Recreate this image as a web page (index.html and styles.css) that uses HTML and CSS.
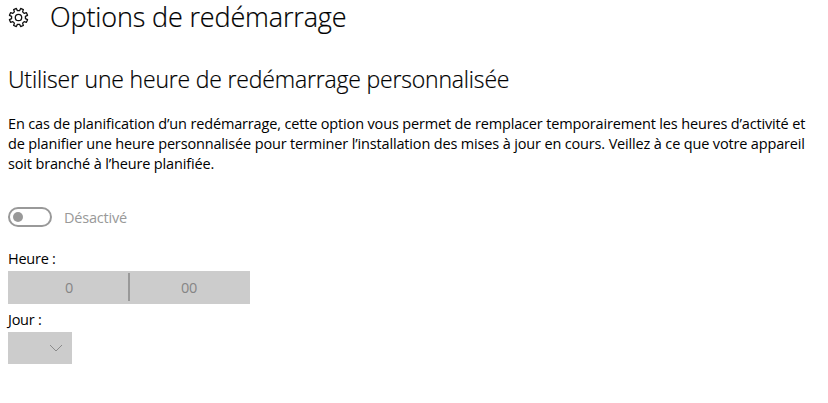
FILE: index.html
```html
<!DOCTYPE html>
<html lang="fr">
<head>
<meta charset="utf-8">
<title>Options de redémarrage</title>
<link rel="stylesheet" href="styles.css">
</head>
<body>
<header class="page-header">
  <svg class="gear" viewBox="-10.5 -10.5 21 21" aria-hidden="true">
    <path d="M6.91 1.1 9.04 2.17 7.93 4.86 5.66 4.11 4.11 5.66 4.86 7.93 2.17 9.04 1.1 6.91H-1.1L-2.17 9.04-4.86 7.93-4.11 5.66-5.66 4.11-7.93 4.86-9.04 2.17-6.91 1.1V-1.1L-9.04-2.17-7.93-4.86-5.66-4.11-4.11-5.66-4.86-7.93-2.17-9.04-1.1-6.91H1.1L2.17-9.04 4.86-7.93 4.11-5.66 5.66-4.11 7.93-4.86 9.04-2.17 6.91-1.1Z"/>
    <circle r="3.2"/>
  </svg>
  <h1>Options de redémarrage</h1>
</header>
<main>
  <h2>Utiliser une heure de redémarrage personnalisée</h2>
  <p class="description">
    <span>En cas de planification d’un redémarrage, cette option vous permet de remplacer temporairement les heures d’activité et</span>
    <span>de planifier une heure personnalisée pour terminer l’installation des mises à jour en cours. Veillez à ce que votre appareil</span>
    <span>soit branché à l’heure planifiée.</span>
  </p>
  <div class="toggle-row">
    <div class="toggle"><div class="knob"></div></div>
    <span class="state">Désactivé</span>
  </div>
  <div class="label hour">Heure :</div>
  <div class="time-picker">
    <div class="cell">0</div>
    <div class="divider"></div>
    <div class="cell">00</div>
  </div>
  <div class="label day">Jour :</div>
  <div class="select">
    <svg class="chevron" viewBox="0 0 14 8" aria-hidden="true"><path d="M1 1 7 7 13 1"/></svg>
  </div>
</main>
</body>
</html>
```
FILE: styles.css
```css
* { box-sizing: border-box; }
body {
  margin: 0;
  padding: 0 8px;
  width: 828px;
  height: 403px;
  overflow: hidden;
  background: #fff;
  color: #000;
  font-family: "Open Sans", "Noto Sans", sans-serif;
  font-size: 14.5px;
}
h1, h2, p { margin: 0; font-weight: 300; white-space: nowrap; }
h1, h2 { -webkit-text-stroke: 0.2px #000; }
.page-header { display: flex; height: 36px; }
.gear { width: 21px; height: 21px; margin-top: 7px; flex: none; }
.gear path, .gear circle { fill: none; stroke: #111; stroke-width: 1.3; stroke-linejoin: round; }
h1 { margin-left: 21px; font-size: 27px; line-height: 34px; letter-spacing: -0.15px; }
h2 { margin-top: 27px; font-size: 23px; line-height: 32px; letter-spacing: -0.18px; }
.description { margin-top: 19px; font-weight: 400; line-height: 20px; letter-spacing: -0.156px; }
.description span { display: block; width: max-content; }
.toggle-row { display: flex; align-items: center; height: 20px; margin-top: 33px; color: #999; }
.toggle { display: flex; align-items: center; width: 44px; height: 20px; padding-left: 3px; border: 2px solid #999; border-radius: 10px; }
.knob { width: 10px; height: 10px; border-radius: 50%; background: #999; }
.state { margin-left: 12px; letter-spacing: -0.2px; }
.label { height: 20px; line-height: 20px; letter-spacing: -0.25px; width: max-content; }
.hour { margin-top: 22px; }
.time-picker { display: flex; width: 242px; height: 33px; margin-top: 2px; background: #ccc; color: #858585; }
.cell { flex: 1; text-align: center; line-height: 33px; letter-spacing: -0.3px; }
.cell:first-child { padding-left: 2px; }
.cell:last-child { padding-right: 2px; }
.divider { width: 2px; height: 28px; margin-top: 2px; background: #999; }
.day { margin-top: 6px; }
.select { display: flex; align-items: center; justify-content: flex-end; width: 64px; height: 32px; margin-top: 2px; padding-right: 9px; background: #ccc; }
.chevron { width: 14px; height: 8px; }
.chevron path { fill: none; stroke: #8a8a8a; stroke-width: 1; }
```
